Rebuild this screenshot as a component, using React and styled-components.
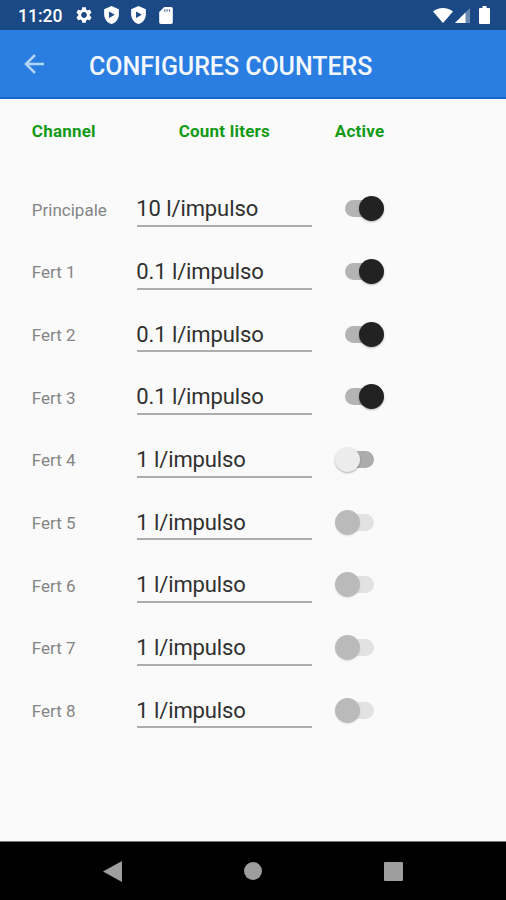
import React from 'react';
import styled, { createGlobalStyle } from 'styled-components';

const roboto = 'Roboto, sans-serif';
const textColor = '#303030';
const labelColor = '#858585';
const green = '#129a16';

const GlobalStyle = createGlobalStyle`
  * {
    box-sizing: border-box;
  }
  body {
    margin: 0;
    background: #fafafa;
    font-family: ${roboto};
  }
`

const Screen = styled.div`
  width: 506px;
  height: 900px;
  display: flex;
  flex-direction: column;
  overflow: hidden;
  background: #fafafa;
`

const StatusBar = styled.div`
  height: 30px;
  flex: none;
  display: flex;
  align-items: center;
  justify-content: space-between;
  padding: 0 16px 0 18px;
  background: #1a4985;
  color: #fff;

  svg {
    display: block;
  }
`

const StatusGroup = styled.div`
  display: flex;
  align-items: center;
`

const Clock = styled.span`
  width: 58px;
  padding-top: 2px;
  font-size: 17.5px;
  font-weight: 500;
  line-height: 28px;
  white-space: nowrap;
`

const StatusIcon = styled.svg`
  width: ${props => props.$w}px;
  height: ${props => props.$h}px;
  margin-left: ${props => props.$gap || 0}px;
  fill: #fff;
`

const AppBar = styled.header`
  height: 69px;
  flex: none;
  display: flex;
  align-items: center;
  padding: 1px 0 0 24px;
  background: #2a7de1;
  border-bottom: 2px solid #1a68cc;
`

const BackIcon = styled.svg`
  width: 21px;
  height: 20px;
  margin-right: 44px;
  fill: none;
  stroke: #b4d3f8;
  stroke-width: 2.5;
`

const Title = styled.h1`
  margin: 5px 0 0;
  font-size: 25px;
  font-weight: 500;
  line-height: 30px;
  letter-spacing: -0.05px;
  color: #f3f8ff;
  white-space: nowrap;
`

const Content = styled.main`
  flex: 1;
  display: flex;
  flex-direction: column;
`

const grid = `
  display: grid;
  grid-template-columns: 105px 175px 1fr;
  padding-left: 31.8px;
`

const Heading = styled.div`
  ${grid}
  height: 79px;
  padding-top: 22px;
`

const HeadCell = styled.span`
  font-size: 17px;
  font-weight: 700;
  line-height: 20px;
  letter-spacing: 0.22px;
  color: ${green};
  text-align: ${props => props.$center ? 'center' : 'left'};
  padding-left: ${props => props.$indent || 0}px;
  white-space: nowrap;
`

const Row = styled.div`
  ${grid}
  height: 62.67px;
  align-items: start;
`

const Label = styled.span`
  padding-top: 21.6px;
  font-size: 17px;
  line-height: 20px;
  color: ${labelColor};
  white-space: nowrap;
`

const Field = styled.div`
  height: 49px;
  padding-top: 17.3px;
  border-bottom: 2px solid #acacac;
  font-size: 22px;
  line-height: 28px;
  letter-spacing: -0.1px;
  text-indent: -0.5px;
  color: ${textColor};
  white-space: nowrap;
`

const track = {
  on: '#b4b4b4',
  off: '#acacac',
  disabled: '#e2e2e2',
}

const thumb = {
  on: '#222',
  off: '#ececec',
  disabled: '#bababa',
}

const SwitchBox = styled.div`
  display: flex;
  align-items: center;
  width: 49px;
  height: 25px;
  margin: 18.3px 0 0 23.2px;
  justify-content: ${props => props.$state === 'on' ? 'flex-end' : 'flex-start'};
  position: relative;
`

const Track = styled.span`
  position: absolute;
  left: 10px;
  top: 4px;
  width: 29px;
  height: 17px;
  border-radius: 9px;
  background: ${props => track[props.$state]};
`

const Thumb = styled.span`
  position: relative;
  width: 25px;
  height: 25px;
  border-radius: 50%;
  background: ${props => thumb[props.$state]};
  box-shadow: 0 1px 2px rgba(0, 0, 0, ${props => props.$state === 'disabled' ? 0.1 : 0.3});
`

const NavBar = styled.nav`
  height: 59px;
  flex: none;
  display: flex;
  align-items: center;
  justify-content: space-between;
  padding: 0 103px 0 102.5px;
  background: #000;
  border-top: 1px solid #777;

  svg {
    display: block;
    fill: #9e9e9e;
  }
`

const rows = [
  { name: 'Principale', value: '10 l/impulso', state: 'on' },
  { name: 'Fert 1', value: '0.1 l/impulso', state: 'on' },
  { name: 'Fert 2', value: '0.1 l/impulso', state: 'on' },
  { name: 'Fert 3', value: '0.1 l/impulso', state: 'on' },
  { name: 'Fert 4', value: '1 l/impulso', state: 'off' },
  { name: 'Fert 5', value: '1 l/impulso', state: 'disabled' },
  { name: 'Fert 6', value: '1 l/impulso', state: 'disabled' },
  { name: 'Fert 7', value: '1 l/impulso', state: 'disabled' },
  { name: 'Fert 8', value: '1 l/impulso', state: 'disabled' },
]

const Shield = ({ gap }) => (
  <StatusIcon viewBox="3 1 18 22" $w={15} $h={18} $gap={gap}>
    <path d="M12 1 3 5v6c0 5.55 3.84 10.74 9 12 5.16-1.26 9-6.45 9-12V5z" />
    <path d="M9 7.6v8l7-4z" fill="#1a4985" />
  </StatusIcon>
)

const Switch = ({ state }) => (
  <SwitchBox $state={state}>
    <Track $state={state} />
    <Thumb $state={state} />
  </SwitchBox>
)

const App = () => {
  return (
    <Screen>
      <GlobalStyle />

      <StatusBar>
        <StatusGroup>
          <Clock>11:20</Clock>
          <StatusIcon viewBox="2 2 20 20" $w={16} $h={16}>
            <path d="M19.14 12.94c.04-.3.06-.61.06-.94 0-.32-.02-.64-.07-.94l2.03-1.58c.18-.14.23-.41.12-.61l-1.92-3.32c-.12-.22-.37-.29-.59-.22l-2.39.96c-.5-.38-1.03-.7-1.62-.94l-.36-2.54c-.04-.24-.24-.41-.48-.41h-3.84c-.24 0-.43.17-.47.41l-.36 2.54c-.59.24-1.13.57-1.62.94l-2.39-.96c-.22-.08-.47 0-.59.22L2.74 8.87c-.12.21-.08.47.12.61l2.03 1.58c-.05.3-.09.63-.09.94s.02.64.07.94l-2.03 1.58c-.18.14-.23.41-.12.61l1.92 3.32c.12.22.37.29.59.22l2.39-.96c.5.38 1.03.7 1.62.94l.36 2.54c.05.24.24.41.48.41h3.84c.24 0 .44-.17.47-.41l.36-2.54c.59-.24 1.13-.56 1.62-.94l2.39.96c.22.08.47 0 .59-.22l1.92-3.32c.12-.22.07-.47-.12-.61zM12 15.6c-1.98 0-3.6-1.62-3.6-3.6s1.62-3.6 3.6-3.6 3.6 1.62 3.6 3.6-1.62 3.6-3.6 3.6" />
          </StatusIcon>
          <Shield gap={12} />
          <Shield gap={12} />
          <StatusIcon viewBox="4 2 16 20" $w={14} $h={17} $gap={13}>
            <path d="M18 2h-8L4.02 8 4 20c0 1.1.9 2 2 2h12c1.1 0 2-.9 2-2V4c0-1.1-.9-2-2-2" />
            <path d="M9.8 4.7h1.4v3H9.8zM12.6 4.7H14v3h-1.4zM15.4 4.7h1.4v3h-1.4z" fill="#1a4985" opacity=".75" />
          </StatusIcon>
        </StatusGroup>
        <StatusGroup>
          <StatusIcon viewBox="0 0 20 15" $w={20} $h={15}>
            <path d="M10 15 0 3.5C2.7 1.2 6.1 0 10 0s7.3 1.2 10 3.5z" />
          </StatusIcon>
          <StatusIcon viewBox="0 0 15 15" $w={15} $h={15} $gap={2}>
            <path d="M0 15 15 0v15z" opacity=".35" />
            <path d="M0 15 10.5 4.5V15z" />
          </StatusIcon>
          <StatusIcon viewBox="0 0 11 18" $w={11} $h={18} $gap={9}>
            <path d="M3.5 0h4v2H10a1 1 0 0 1 1 1v14a1 1 0 0 1-1 1H1a1 1 0 0 1-1-1V3a1 1 0 0 1 1-1h2.5z" />
          </StatusIcon>
        </StatusGroup>
      </StatusBar>

      <AppBar>
        <BackIcon viewBox="0 0 21 20">
          <path d="M20 10H2M11 1 2 10l9 9" />
        </BackIcon>
        <Title>CONFIGURES COUNTERS</Title>
      </AppBar>

      <Content>
        <Heading>
          <HeadCell>Channel</HeadCell>
          <HeadCell $center>Count liters</HeadCell>
          <HeadCell $indent={23}>Active</HeadCell>
        </Heading>
        {rows.map(row => (
          <Row key={row.name}>
            <Label>{row.name}</Label>
            <Field>{row.value}</Field>
            <Switch state={row.state} />
          </Row>
        ))}
      </Content>

      <NavBar>
        <svg width="19" height="21" viewBox="0 0 19 21"><path d="M19 0v21L0 10.5z" /></svg>
        <svg width="18" height="18" viewBox="0 0 18 18"><circle cx="9" cy="9" r="9" /></svg>
        <svg width="19" height="19" viewBox="0 0 19 19"><rect width="19" height="19" rx="1" /></svg>
      </NavBar>
    </Screen>
  )
}

export default App
